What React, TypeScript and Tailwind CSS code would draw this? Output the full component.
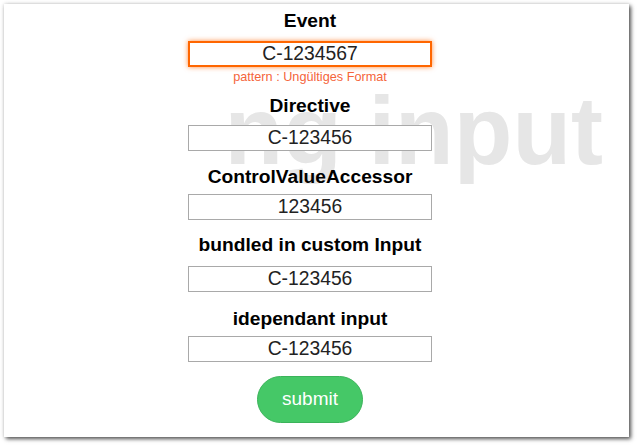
import React from 'react';

const font = "font-['Liberation_Sans',Arial,sans-serif]";

const Label = ({ text, className }: { text: string; className: string }) => (
  <h3 className={`h-[21px] text-[19.2px] font-bold leading-[21px] text-black ${className}`}>{text}</h3>
);

const Field = ({ value, className }: { value: string; className: string }) => (
  <input
    defaultValue={value}
    className={`h-[26px] w-[244px] border border-[#a9a9a9] bg-white text-center text-[19.3px] leading-[24px] text-[#222] outline-none ${className}`}
  />
);

export default function App() {
  return (
    <div className={`min-h-screen bg-white p-[4px] ${font}`}>
      <div className="relative h-[433px] w-[625px] bg-white shadow-[2px_2px_4px_rgba(0,0,0,0.65),0_0_4px_rgba(0,0,0,0.15)]">
        <div className="absolute right-[26px] top-[79px] select-none text-[96px] font-bold leading-[95px] text-[#e6e6e6]">
          ng input
        </div>
        <div className="relative flex flex-col items-center pr-[13px] pt-[6px]">
          <Label text="Event" className="" />
          <Field
            value="C-1234567"
            className="mt-[10px] border-2 border-[#ff6600] shadow-[0_0_5px_rgba(255,102,0,0.75)]"
          />
          <p className="mt-[3px] h-[14px] text-[12.7px] leading-[14px] text-[#f5643a]">pattern : Ungültiges Format</p>

          <Label text="Directive" className="mt-[11px]" />
          <Field value="C-123456" className="mt-[9px]" />

          <Label text="ControlValueAccessor" className="mt-[15px]" />
          <Field value="123456" className="mt-[7px]" />

          <Label text="bundled in custom Input" className="mt-[14px]" />
          <Field value="C-123456" className="mt-[11px]" />

          <Label text="idependant input" className="mt-[16px]" />
          <Field value="C-123456" className="mt-[7px]" />

          <button className="mt-[14px] h-[47px] w-[106px] rounded-full border border-[#3bb35a] bg-[#45c867] text-[19px] text-white">
            submit
          </button>
        </div>
      </div>
    </div>
  );
}
